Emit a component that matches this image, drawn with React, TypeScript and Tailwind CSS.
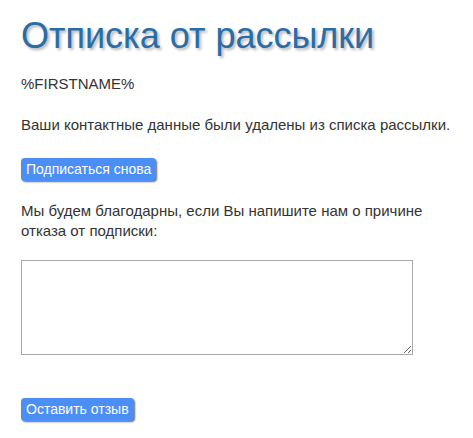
export default function App() {
  return (
    <div className="min-h-screen bg-white pl-[21px] pr-[10px] pt-[16px] font-['Liberation_Sans',Arial,sans-serif] text-[15px] text-[#333]">
      <h1 className="text-[36px] leading-[40px] text-[#286da8] [text-shadow:2px_2px_3px_rgba(0,0,0,0.3)]">
        Отписка от рассылки
      </h1>

      <p className="mt-[18px] leading-[20px]">%FIRSTNAME%</p>

      <p className="mt-[21px] leading-[20px]">
        Ваши контактные данные были удалены из списка рассылки.
      </p>

      <button className="mt-[23px] block h-[23px] rounded-[4px] bg-[#4b8ef5] px-[5px] text-[14px] text-white shadow-[1px_1px_2px_rgba(0,0,0,0.6)]">
        Подписаться снова
      </button>

      <p className="mt-[20px] leading-[20px]">
        Мы будем благодарны, если Вы напишите нам о причине отказа от подписки:
      </p>

      <textarea className="mt-[19px] block h-[95px] w-[392px] border border-[#a9a9a9] bg-white" />

      <button className="mt-[43px] block h-[23px] rounded-[4px] bg-[#4b8ef5] px-[5px] text-[14px] text-white shadow-[1px_1px_2px_rgba(0,0,0,0.6)]">
        Оставить отзыв
      </button>
    </div>
  );
}
